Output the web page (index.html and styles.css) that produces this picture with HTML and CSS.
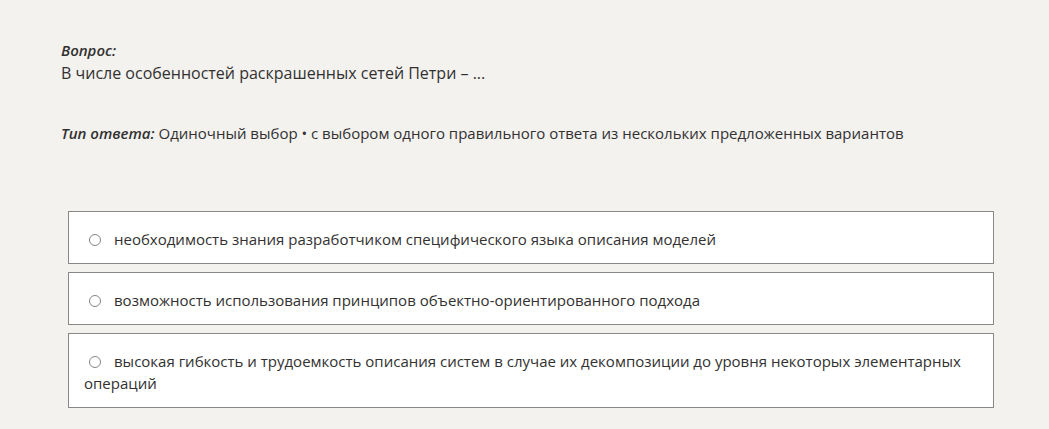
FILE: index.html
```html
<!DOCTYPE html>
<html lang="ru">
<head>
<meta charset="utf-8">
<link rel="stylesheet" href="styles.css">
</head>
<body>
<div class="page">
  <div class="question">
    <div class="label">Вопрос:</div>
    <div class="qtext">В числе особенностей раскрашенных сетей Петри – ...</div>
  </div>
  <div class="type"><span class="label">Тип ответа:</span> Одиночный выбор • с выбором одного правильного ответа из нескольких предложенных вариантов</div>
  <div class="options">
    <div class="option"><span class="radio"></span><span class="otext">необходимость знания разработчиком специфического языка описания моделей</span></div>
    <div class="option"><span class="radio"></span><span class="otext">возможность использования принципов объектно-ориентированного подхода</span></div>
    <div class="option"><span class="radio"></span><span class="otext">высокая гибкость и трудоемкость описания систем в случае их декомпозиции до уровня некоторых элементарных операций</span></div>
  </div>
</div>
</body>
</html>
```
FILE: styles.css
```css
html, body {
  margin: 0;
  padding: 0;
  background: #f3f2ef;
}
body {
  font-family: "Open Sans", "Noto Sans", sans-serif;
  font-size: 15px;
  color: #323130;
}
.page {
  padding: 39px 0 0 61px;
}
.label {
  font-weight: 600;
  font-style: italic;
  font-size: 15px;
}
.question .label {
  line-height: 22px;
}
.qtext {
  font-size: 16px;
  line-height: 24px;
}
.type {
  margin-top: 37px;
  font-size: 15px;
  line-height: 22px;
}
.options {
  margin: 67px 0 0 7px;
  width: 926px;
  display: flex;
  flex-direction: column;
  gap: 8px;
}
.option {
  background: #fff;
  border: 1px solid #8a8886;
  padding: 16px 15px 13px 15px;
  line-height: 22px;
}
.radio {
  display: inline-block;
  width: 10px;
  height: 10px;
  border: 1px solid #858585;
  border-radius: 50%;
  margin: 0 13px 0 5px;
  vertical-align: -1px;
}
```
